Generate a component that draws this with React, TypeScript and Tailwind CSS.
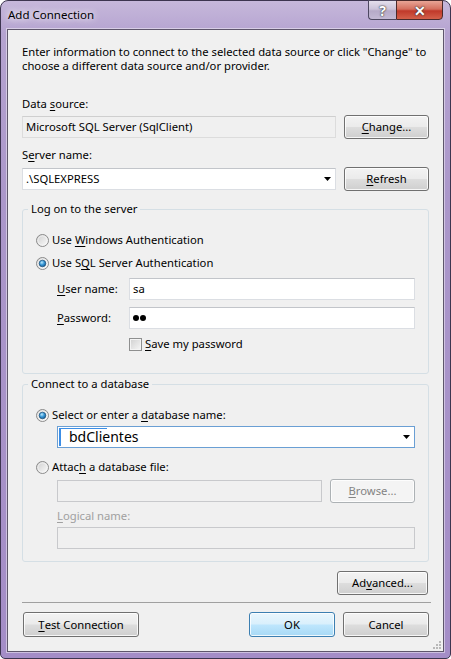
import React from "react";

type Kids = { children?: React.ReactNode };

function U({ children }: Kids) {
  return <span className="underline underline-offset-[2px] decoration-1">{children}</span>;
}

function Radio({ checked, id }: { checked?: boolean; id: string }) {
  return (
    <svg width="13" height="13" viewBox="0 0 13 13" className="shrink-0">
      <defs>
        <linearGradient id={`${id}-bg`} x1="0" y1="0" x2="1" y2="1">
          <stop offset="0" stopColor="#cdcdcd" />
          <stop offset="1" stopColor="#fdfdfd" />
        </linearGradient>
        <radialGradient id={`${id}-dot`} cx="0.4" cy="0.35" r="0.75">
          <stop offset="0" stopColor="#bde9fb" />
          <stop offset="0.45" stopColor="#3a9ad9" />
          <stop offset="1" stopColor="#0d4f86" />
        </radialGradient>
      </defs>
      <circle cx="6.5" cy="6.5" r="6" fill={`url(#${id}-bg)`} stroke="#8a8a8a" />
      <circle cx="6.5" cy="6.5" r="4.6" fill="none" stroke="#f6f6f6" strokeWidth="1" opacity="0.7" />
      {checked && <circle cx="6.5" cy="6.5" r="3.3" fill={`url(#${id}-dot)`} stroke="#1a4f7a" strokeWidth="0.7" />}
    </svg>
  );
}

function Btn({ children, className = "", primary, disabled }: Kids & { className?: string; primary?: boolean; disabled?: boolean }) {
  let look = "border-[#707070] bg-[linear-gradient(#f3f3f3,#ebebeb_48%,#dddddd_52%,#cfcfcf)] text-black";
  if (primary) look = "border-[#3c7fb1] bg-[linear-gradient(#eaf6fd,#d9f0fc_48%,#bee6fd_52%,#a7d9f5)] text-black";
  if (disabled) look = "border-[#adb2b5] bg-[#f4f4f4] text-[#838383]";
  return (
    <div className={`flex items-center justify-center rounded-[3px] border shadow-[inset_0_0_0_1px_rgba(255,255,255,0.8)] leading-[14px] ${look} ${className}`}>
      {children}
    </div>
  );
}

function Arrow() {
  return (
    <svg width="7" height="4" viewBox="0 0 7 4" className="shrink-0">
      <path d="M0 0h7L3.5 4z" fill="#000" />
    </svg>
  );
}

export default function App() {
  return (
    <div className="w-[451px] h-[659px] flex flex-col rounded-t-[8px] rounded-b-[5px] border border-[#3d3550] bg-[linear-gradient(180deg,#c6b8db_0%,#b5a3d0_5%,#ab97ca_30%,#a48dc7_100%)] px-[6px] pb-[6px] font-['Noto_Sans',sans-serif] text-[11.25px] text-black">
      {/* title bar */}
      <div className="h-[28px] flex items-start justify-between">
        <span className="mt-[7px] ml-[1px] text-[11.5px] leading-[14px] [text-shadow:0_0_6px_#fff,0_0_10px_rgba(255,255,255,0.8)]">
          Add Connection
        </span>
        <div className="flex -mt-px mr-[1px]">
          <div className="w-[28px] h-[20px] flex items-center justify-center rounded-bl-[4px] border border-[#4d4760] border-r-0 bg-[linear-gradient(#e4dfec,#cbc3d9_45%,#b6aac8_55%,#c3b9d4)] text-white font-bold text-[14px] [text-shadow:0_0_2px_#333,0_0_1px_#222]">
            ?
          </div>
          <div className="w-[47px] h-[20px] flex items-center justify-center rounded-br-[4px] border border-[#4a2a2a] bg-[linear-gradient(#e8a596,#d46f5e_45%,#c0392a_55%,#d4604a)] text-white font-bold text-[14px] [text-shadow:0_0_2px_#333,0_0_1px_#222]">
            ✕
          </div>
        </div>
      </div>

      {/* client */}
      <div className="relative flex-1 flex flex-col border border-[#5e566b] bg-[#f0f0f0] px-[14px] pt-[15px] shadow-[0_0_0_1px_rgba(255,255,255,0.45)]">
        <p className="leading-[14px] whitespace-nowrap">
          Enter information to connect to the selected data source or click "Change" to
          <br />
          choose a different data source and/or provider.
        </p>

        <div className="mt-[24px] leading-[14px]">
          Data <U>s</U>ource:
        </div>
        <div className="mt-[4px] h-[24px] flex items-center gap-[8px]">
          <div className="flex-1 h-[22px] flex items-center pl-[3px] border border-[#dcdcdc] border-t-[#cfcfcf] bg-[#f0f0f0] leading-[14px]">
            Microsoft SQL Server (SqlClient)
          </div>
          <Btn className="w-[85px] h-[24px]">
            <U>C</U>hange...
          </Btn>
        </div>

        <div className="mt-[9px] leading-[14px]">
          S<U>e</U>rver name:
        </div>
        <div className="mt-[5px] h-[24px] flex items-center gap-[8px]">
          <div className="flex-1 h-[22px] flex items-center justify-between pl-[3px] pr-[4px] border border-[#dbdee3] border-t-[#c2c5ca] bg-white leading-[14px]">
            <span>.\SQLEXPRESS</span>
            <Arrow />
          </div>
          <Btn className="w-[85px] h-[24px]">
            <U>R</U>efresh
          </Btn>
        </div>

        {/* log on group */}
        <fieldset className="mt-[11px] rounded-[3px] border border-[#d5dfe5]">
          <legend className="ml-[5px] px-[3px] leading-[14px]">Log on to the server</legend>
          <div className="px-[13px] pt-[17px] pb-[22px]">
            <div className="h-[14px] flex items-center gap-[3px] leading-[14px]">
              <Radio id="r1" />
              <span>
                Use <U>W</U>indows Authentication
              </span>
            </div>
            <div className="mt-[9px] h-[14px] flex items-center gap-[3px] leading-[14px]">
              <Radio id="r2" checked />
              <span>
                Use S<U>Q</U>L Server Authentication
              </span>
            </div>
            <div className="mt-[8px] h-[22px] flex items-center pl-[21px]">
              <span className="w-[72px] leading-[14px]">
                <U>U</U>ser name:
              </span>
              <div className="flex-1 h-[22px] flex items-center pl-[3px] border border-[#dbdee3] border-t-[#c2c5ca] bg-white leading-[14px]">
                sa
              </div>
            </div>
            <div className="mt-[7px] h-[22px] flex items-center pl-[21px]">
              <span className="w-[72px] leading-[14px]">
                <U>P</U>assword:
              </span>
              <div className="flex-1 h-[22px] flex items-center gap-[1px] pl-[3px] border border-[#dbdee3] border-t-[#c2c5ca] bg-white">
                <span className="w-[6px] h-[6px] rounded-full bg-black" />
                <span className="w-[6px] h-[6px] rounded-full bg-black" />
              </div>
            </div>
            <div className="mt-[8px] h-[14px] flex items-center gap-[3px] pl-[93px] leading-[14px]">
              <div className="w-[13px] h-[13px] shrink-0 border border-[#8e8f8f] bg-[linear-gradient(135deg,#d0d0d0,#f7f7f7)] shadow-[inset_0_0_0_1px_#f4f4f4]" />
              <span>
                <U>S</U>ave my password
              </span>
            </div>
          </div>
        </fieldset>

        {/* database group */}
        <fieldset className="mt-[3px] rounded-[3px] border border-[#d5dfe5]">
          <legend className="ml-[5px] px-[3px] leading-[14px]">Connect to a database</legend>
          <div className="px-[13px] pt-[17px] pb-[12px]">
            <div className="h-[14px] flex items-center gap-[3px] leading-[14px]">
              <Radio id="r3" checked />
              <span>
                Select or enter a <U>d</U>atabase name:
              </span>
            </div>
            <div className="relative mt-[4px] ml-[21px] h-[22px] flex items-center justify-between pr-[4px] border border-[#6a9fd4] bg-white">
              <span className="absolute left-px top-px w-[48px] h-px bg-[#3c8ee6]" />
              <div className="ml-px h-[18px] flex items-center">
                <span className="h-[17px] w-[2px] bg-[#3c8ee6]" />
                <span className="ml-[8px] text-[14px] leading-[16px]">bdClientes</span>
              </div>
              <Arrow />
            </div>
            <div className="mt-[12px] h-[14px] flex items-center gap-[3px] leading-[14px]">
              <Radio id="r4" />
              <span>
                Attac<U>h</U> a database file:
              </span>
            </div>
            <div className="mt-[5px] ml-[21px] h-[24px] flex items-center gap-[8px]">
              <div className="flex-1 h-[22px] border border-[#c8c9cc] bg-[#f0f0f0]" />
              <Btn disabled className="w-[85px] h-[24px]">
                <U>B</U>rowse...
              </Btn>
            </div>
            <div className="mt-[6px] ml-[21px] leading-[14px] text-[#a0a0a0]">
              <U>L</U>ogical name:
            </div>
            <div className="mt-[4px] ml-[21px] h-[22px] border border-[#c8c9cc] bg-[#f0f0f0]" />
          </div>
        </fieldset>

        <div className="mt-[9px] flex justify-end">
          <Btn className="mr-[1px] w-[91px] h-[24px]">
            Ad<U>v</U>anced...
          </Btn>
        </div>

        <div className="mt-[7px] -mr-[2px] h-px bg-[#a0a0a0]" />

        <div className="mt-[9px] flex items-center">
          <Btn className="ml-[1px] w-[116px] h-[25px]">
            <U>T</U>est Connection
          </Btn>
          <div className="flex-1" />
          <Btn primary className="w-[86px] h-[25px]">
            OK
          </Btn>
          <Btn className="ml-[8px] w-[86px] h-[25px]">Cancel</Btn>
        </div>

        {/* resize grip */}
        <svg width="10" height="10" viewBox="0 0 10 10" className="absolute right-[1px] bottom-[1px]">
          <g fill="#b8b8b8">
            <rect x="7" y="1" width="2" height="2" />
            <rect x="4" y="4" width="2" height="2" />
            <rect x="7" y="4" width="2" height="2" />
            <rect x="1" y="7" width="2" height="2" />
            <rect x="4" y="7" width="2" height="2" />
            <rect x="7" y="7" width="2" height="2" />
          </g>
        </svg>
      </div>
    </div>
  );
}
